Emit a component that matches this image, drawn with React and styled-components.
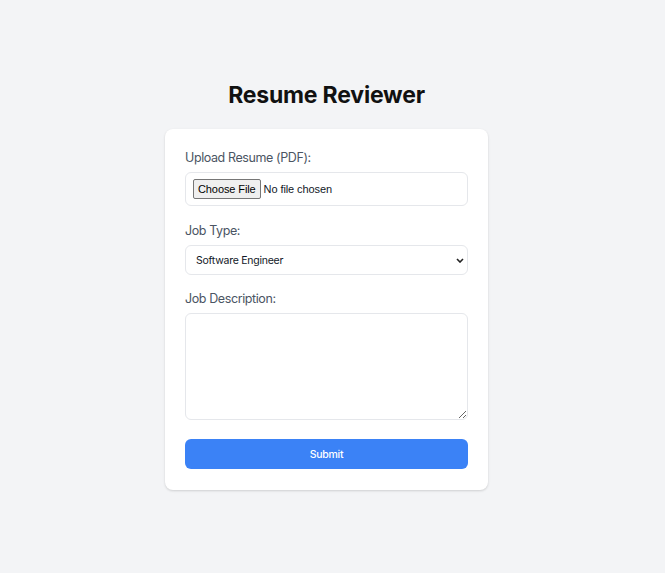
import React from "react";
import styled, { createGlobalStyle } from "styled-components";

const GlobalStyle = createGlobalStyle`
  * { box-sizing: border-box; }
  body {
    margin: 0;
    background: #f3f4f6;
    font-family: Inter, "Noto Sans", sans-serif;
    color: #111827;
  }
`;

const Page = styled.div`
  min-height: 573px;
  display: flex;
  flex-direction: column;
  align-items: center;
  padding: 81px 12px 0 0;
`;

const Title = styled.h1`
  margin: 0 0 20px;
  font-size: 23px;
  line-height: 28px;
  font-weight: 700;
  letter-spacing: -0.2px;
  color: #111111;
`;

const Card = styled.form`
  width: 323px;
  background: #ffffff;
  border-radius: 8px;
  box-shadow: 0 1px 3px rgba(0, 0, 0, 0.1), 0 1px 2px rgba(0, 0, 0, 0.06);
  padding: 19px 20px 21px;
  display: flex;
  flex-direction: column;
`;

const Field = styled.div`
  display: flex;
  flex-direction: column;
  margin-bottom: ${props => props.gap || 14}px;
`;

const Label = styled.label`
  font-size: 12.5px;
  line-height: 20px;
  font-weight: 400;
  letter-spacing: -0.4px;
  color: #4b5563;
  margin-bottom: 4px;
`;

const FileInput = styled.input`
  width: 100%;
  height: 34px;
  padding: 6px 7px;
  border: 1px solid #e5e7eb;
  border-radius: 6px;
  font-family: "Liberation Sans", Arial, sans-serif;
  font-size: 11px;
  letter-spacing: -0.1px;
  color: #111827;
  background: #fff;

  &::file-selector-button {
    height: 20px;
    margin: 0 3px 0 0;
    padding: 0 4px;
    border: 1px solid #767676;
    border-radius: 2px;
    background: #efefef;
    color: #000;
    font-family: "Liberation Sans", Arial, sans-serif;
    font-size: 11px;
    letter-spacing: -0.1px;
  }
`;

const SelectWrap = styled.div`
  position: relative;
`;

const Select = styled.select`
  width: 100%;
  height: 30px;
  padding: 0 20px 0 10px;
  border: 1px solid #e5e7eb;
  border-radius: 6px;
  appearance: none;
  font-family: Inter, "Noto Sans", sans-serif;
  font-size: 10.5px;
  letter-spacing: -0.25px;
  color: #111827;
  background: #fff;
`;

const Chevron = styled.svg`
  position: absolute;
  right: 4px;
  top: 13px;
  pointer-events: none;
`;

const TextArea = styled.textarea`
  display: block;
  width: 100%;
  height: 107px;
  padding: 8px;
  border: 1px solid #e5e7eb;
  border-radius: 6px;
  font-family: Inter, "Noto Sans", sans-serif;
  font-size: 12px;
  background: #fff;
`;

const Button = styled.button`
  width: 100%;
  height: 30px;
  border: none;
  border-radius: 6px;
  background: #3b82f6;
  color: #ffffff;
  font-family: Inter, "Noto Sans", sans-serif;
  font-size: 10.5px;
  font-weight: 500;
  letter-spacing: -0.25px;
  cursor: pointer;
`;

export default function App() {
  return (
    <>
      <GlobalStyle />
      <Page>
        <Title>Resume Reviewer</Title>
        <Card onSubmit={e => e.preventDefault()}>
          <Field gap={15}>
            <Label>Upload Resume (PDF):</Label>
            <FileInput type="file" accept="application/pdf" />
          </Field>
          <Field>
            <Label>Job Type:</Label>
            <SelectWrap>
              <Select defaultValue="software">
                <option value="software">Software Engineer</option>
                <option value="data">Data Scientist</option>
                <option value="pm">Product Manager</option>
              </Select>
              <Chevron width="8" height="5" viewBox="0 0 8 5">
                <path d="M1 1l3 3 3-3" fill="none" stroke="#222" strokeWidth="1.6" />
              </Chevron>
            </SelectWrap>
          </Field>
          <Field gap={19}>
            <Label>Job Description:</Label>
            <TextArea />
          </Field>
          <Button type="submit">Submit</Button>
        </Card>
      </Page>
    </>
  );
}
